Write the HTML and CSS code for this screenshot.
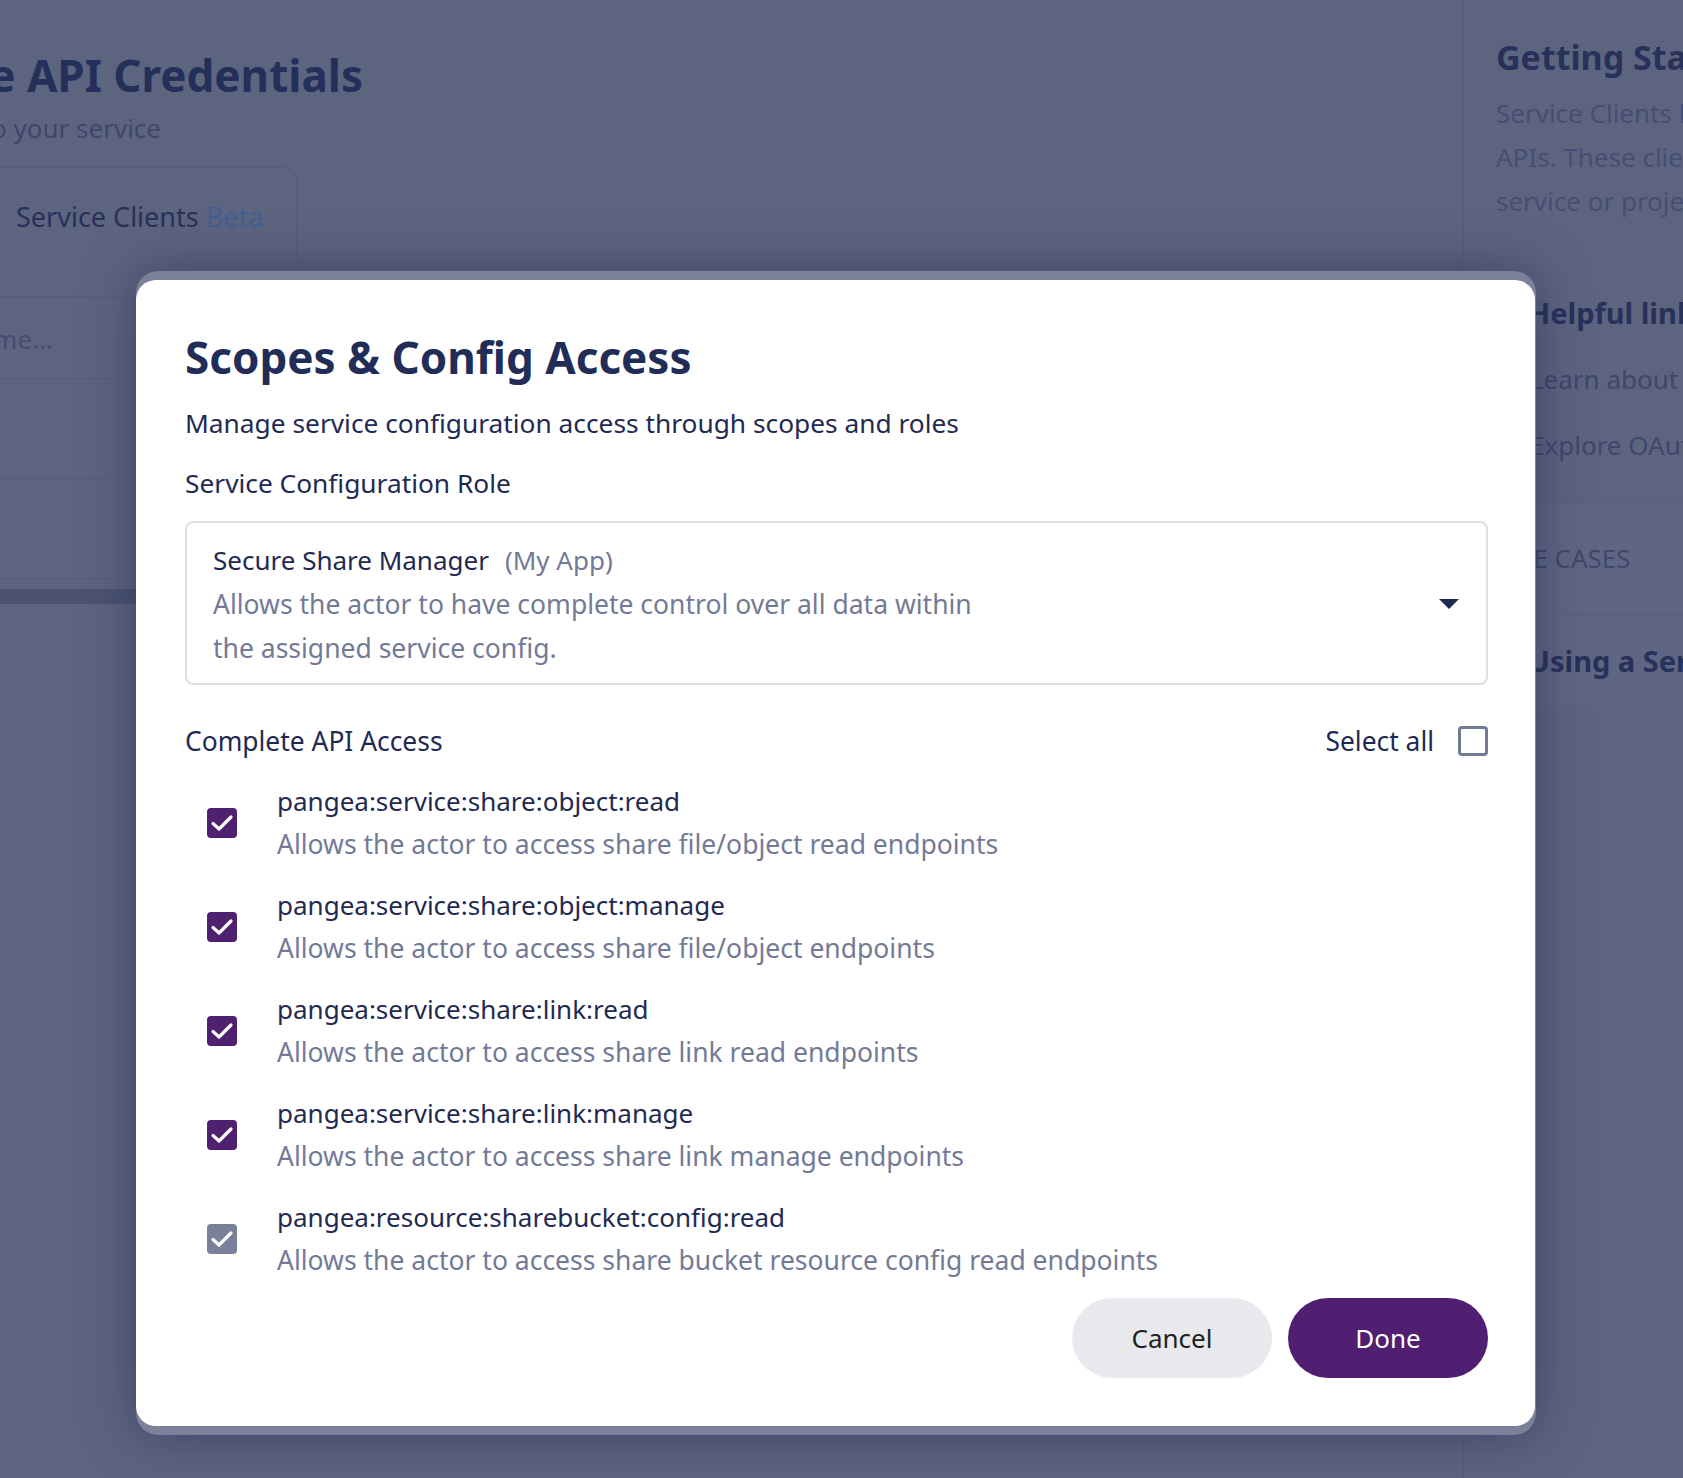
FILE: index.html
```html
<!DOCTYPE html>
<html lang="en">
<head>
<meta charset="utf-8">
<title>Scopes &amp; Config Access</title>
<link rel="stylesheet" href="styles.css">
</head>
<body>
<div class="page">
  <main class="main">
    <div class="edge title-edge"><h1 class="page-title">Manage API Credentials</h1></div>
    <div class="edge sub-edge"><p class="page-sub">Create credentials to connect to your service</p></div>
    <div class="tabs">
      <div class="tab">Service Clients <span class="beta">Beta</span></div>
      <div class="tab-rest"></div>
    </div>
    <div class="table">
      <div class="trow search"><div class="edge search-edge"><span>Search by name...</span></div></div>
      <div class="trow"></div>
      <div class="trow"></div>
      <div class="scrollbar"></div>
    </div>
  </main>
  <aside class="sidebar">
    <h2 class="side-title">Getting Started</h2>
    <p class="side-text">Service Clients let you access Pangea<br>APIs. These clients are scoped to a<br>service or project.</p>
    <h3 class="side-h">Helpful links</h3>
    <p class="side-link">Learn about service clients</p>
    <p class="side-link">Explore OAuth flows</p>
    <div class="side-card">
      <p class="side-caps">USE CASES</p>
    </div>
    <div class="side-card2">
      <h3 class="side-h2">Using a Service Client</h3>
    </div>
  </aside>
</div>

<div class="overlay">
  <div class="modal-frame">
    <div class="modal">
      <h2 class="modal-title">Scopes &amp; Config Access</h2>
      <p class="modal-sub">Manage service configuration access through scopes and roles</p>
      <p class="label">Service Configuration Role</p>
      <div class="select">
        <div class="select-body">
          <div class="role-line"><span class="role-name">Secure Share Manager</span><span class="role-app">(My App)</span></div>
          <div class="role-desc">Allows the actor to have complete control over all data within<br>the assigned service config.</div>
        </div>
        <svg class="caret" width="20" height="12" viewBox="0 0 20 12"><path d="M0 1 L20 1 L10 11 Z" fill="#1f2a52"/></svg>
      </div>
      <div class="access-head">
        <span class="access-title">Complete API Access</span>
        <label class="select-all">Select all <span class="box-empty"></span></label>
      </div>
      <ul class="scopes">
        <li class="scope">
          <span class="check"><svg width="30" height="30" viewBox="0 0 30 30"><path d="M6 15.5 L12 21 L24 9" fill="none" stroke="#fff" stroke-width="3.2" stroke-linecap="round" stroke-linejoin="round"/></svg></span>
          <div class="scope-text"><div class="scope-name">pangea:service:share:object:read</div><div class="scope-desc">Allows the actor to access share file/object read endpoints</div></div>
        </li>
        <li class="scope">
          <span class="check"><svg width="30" height="30" viewBox="0 0 30 30"><path d="M6 15.5 L12 21 L24 9" fill="none" stroke="#fff" stroke-width="3.2" stroke-linecap="round" stroke-linejoin="round"/></svg></span>
          <div class="scope-text"><div class="scope-name">pangea:service:share:object:manage</div><div class="scope-desc">Allows the actor to access share file/object endpoints</div></div>
        </li>
        <li class="scope">
          <span class="check"><svg width="30" height="30" viewBox="0 0 30 30"><path d="M6 15.5 L12 21 L24 9" fill="none" stroke="#fff" stroke-width="3.2" stroke-linecap="round" stroke-linejoin="round"/></svg></span>
          <div class="scope-text"><div class="scope-name">pangea:service:share:link:read</div><div class="scope-desc">Allows the actor to access share link read endpoints</div></div>
        </li>
        <li class="scope">
          <span class="check"><svg width="30" height="30" viewBox="0 0 30 30"><path d="M6 15.5 L12 21 L24 9" fill="none" stroke="#fff" stroke-width="3.2" stroke-linecap="round" stroke-linejoin="round"/></svg></span>
          <div class="scope-text"><div class="scope-name">pangea:service:share:link:manage</div><div class="scope-desc">Allows the actor to access share link manage endpoints</div></div>
        </li>
        <li class="scope">
          <span class="check disabled"><svg width="30" height="30" viewBox="0 0 30 30"><path d="M6 15.5 L12 21 L24 9" fill="none" stroke="#fff" stroke-width="3.2" stroke-linecap="round" stroke-linejoin="round"/></svg></span>
          <div class="scope-text"><div class="scope-name">pangea:resource:sharebucket:config:read</div><div class="scope-desc">Allows the actor to access share bucket resource config read endpoints</div></div>
        </li>
      </ul>
      <div class="actions">
        <button class="btn btn-cancel">Cancel</button>
        <button class="btn btn-done">Done</button>
      </div>
    </div>
  </div>
</div>
</body>
</html>
```

FILE: styles.css
```css
* { box-sizing: border-box; }
html, body { margin: 0; padding: 0; }
body {
  width: 1683px;
  height: 1478px;
  overflow: hidden;
  background: #5d6480;
  font-family: "Noto Sans", "Open Sans", sans-serif;
  color: #1f2a52;
}
p, h1, h2, h3 { margin: 0; }

.page {
  display: flex;
  height: 1478px;
}
.main {
  flex: 1;
  min-width: 0;
  overflow: hidden;
  padding-top: 46px;
}
/* right-anchored rows whose text runs off the left edge */
.edge {
  display: flex;
  justify-content: flex-end;
  white-space: nowrap;
}
.title-edge { width: 363px; }
.sub-edge { width: 161px; margin-top: 6px; }
.search-edge { width: 53px; }

.page-title {
  font-size: 44px;
  line-height: 58px;
  font-weight: 700;
  color: #25305a;
  flex: none;
}
.page-sub {
  font-size: 26px;
  line-height: 36px;
  color: #3f476d;
  flex: none;
}
.tabs {
  display: flex;
  margin-top: 21px;
  height: 94px;
}
.tab {
  width: 297px;
  border: 1px solid #565d7c;
  border-left: none;
  border-bottom: none;
  border-top-right-radius: 14px;
  padding-left: 16px;
  padding-top: 30px;
  font-size: 27px;
  color: #27315a;
  white-space: nowrap;
}
.beta { color: #41608f; }
.tab-rest {
  flex: 1;
  border-bottom: 1px solid #565d7c;
}
.table {
  margin-top: 35px;
  border-top: 1px solid #565d7c;
}
.trow {
  height: 82px;
  border-bottom: 1px solid #565d7c;
}
.trow + .trow { height: 100px; }
.trow.search {
  padding-top: 24px;
  font-size: 26px;
  color: #444c72;
}
.search-edge span { flex: none; }
.scrollbar {
  margin-top: 10px;
  height: 15px;
  background: #4c5372;
}

.sidebar {
  width: 220px;
  flex: none;
  border-left: 1px solid #565d7c;
  padding-top: 35px;
  overflow: hidden;
  white-space: nowrap;
}
.side-title {
  padding-left: 32px;
  font-size: 34px;
  line-height: 44px;
  font-weight: 700;
  color: #27315a;
}
.side-text {
  padding-left: 32px;
  font-size: 26px;
  line-height: 44px;
  color: #464e74;
  margin-top: 12px;
}
.side-h {
  padding-left: 64px;
  margin-top: 70px;
  font-size: 29px;
  line-height: 40px;
  font-weight: 700;
  color: #27315a;
}
.side-link {
  padding-left: 66px;
  font-size: 26px;
  line-height: 40px;
  color: #3f476d;
  margin-top: 26px;
}
.side-card {
  margin-top: 38px;
  border-top: 1px solid #585f7e;
  border-bottom: 1px solid #585f7e;
  background: #5f6683;
  height: 112px;
  padding-top: 34px;
  padding-left: 36px;
}
.side-caps {
  font-size: 26px;
  line-height: 40px;
  color: #3f476d;
}
.side-card2 {
  background: #5f6683;
  height: 90px;
  padding-top: 26px;
  padding-left: 64px;
}
.side-h2 {
  font-size: 29px;
  line-height: 40px;
  font-weight: 700;
  color: #27315a;
}

/* overlay + modal */
.overlay {
  position: fixed;
  inset: 0;
  padding-top: 271px;
  padding-left: 136px;
}
.modal-frame {
  width: 1400px;
  padding: 9px 1px 9px 0;
  background: #7c8199;
  border-radius: 22px;
  box-shadow: 0 0 50px rgba(30, 38, 75, 0.5);
}
.modal {
  background: #fff;
  border-radius: 20px;
  padding: 49px 47px 48px 49px;
}
.modal-title {
  font-size: 44px;
  line-height: 56px;
  font-weight: 700;
  color: #222d57;
}
.modal-sub {
  margin-top: 16px;
  font-size: 26.3px;
  line-height: 44px;
  color: #1f2a52;
}
.label {
  margin-top: 16px;
  font-size: 26.3px;
  line-height: 44px;
  color: #1f2a52;
}
.select {
  margin-top: 16px;
  border: 2px solid #dfe0e6;
  border-radius: 8px;
  padding: 15px 26px 13px 26px;
  display: flex;
  align-items: center;
  justify-content: space-between;
}
.role-line {
  font-size: 26px;
  line-height: 44px;
}
.role-name { color: #1f2a52; }
.role-app { color: #737a96; margin-left: 16px; }
.role-desc {
  font-size: 26.5px;
  line-height: 44px;
  color: #737a96;
}
.caret { margin-right: 1px; }

.access-head {
  margin-top: 34px;
  display: flex;
  justify-content: space-between;
  align-items: center;
  font-size: 26.4px;
  line-height: 44px;
}
.select-all {
  display: flex;
  align-items: center;
  gap: 24px;
}
.box-empty {
  width: 30px;
  height: 30px;
  border: 3px solid #737a94;
  border-radius: 4px;
}
.scopes {
  list-style: none;
  margin: 17px 0 0;
  padding: 0;
  display: flex;
  flex-direction: column;
  gap: 18px;
}
.scope {
  display: flex;
  align-items: center;
  gap: 40px;
  padding-left: 22px;
}
.check {
  width: 30px;
  height: 30px;
  border-radius: 4px;
  background: #4f1f70;
  display: flex;
  flex: none;
}
.check.disabled { background: #7a8099; }
.scope-name {
  font-size: 26px;
  line-height: 43px;
  color: #1f2a52;
}
.scope-desc {
  font-size: 26.5px;
  line-height: 43px;
  color: #737a96;
}
.actions {
  margin-top: 16px;
  display: flex;
  justify-content: flex-end;
  gap: 16px;
}
.btn {
  width: 200px;
  height: 80px;
  border: none;
  border-radius: 40px;
  font-family: inherit;
  font-size: 26px;
  cursor: pointer;
}
.btn-cancel { background: #e8e9ed; color: #1f1f22; }
.btn-done { background: #501f71; color: #fff; }
```
